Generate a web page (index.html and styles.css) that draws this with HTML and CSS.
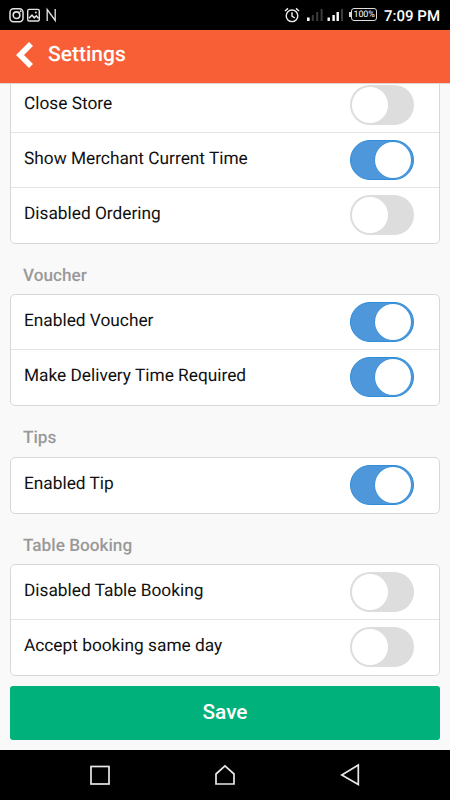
FILE: index.html
```html
<!DOCTYPE html>
<html lang="en">
<head>
  <meta charset="UTF-8">
  <title>Settings</title>
  <link rel="stylesheet" href="styles.css">
</head>
<body>

  <!-- Status bar -->
  <div class="statusbar">
    <svg class="status-left" width="50" height="18" viewBox="0 0 50 18" fill="none" stroke="#e4e4e4">
      <rect x="1" y="2.7" width="13" height="13" rx="3.5" stroke-width="1.5"/>
      <circle cx="7.5" cy="9.2" r="3.3" stroke-width="1.6"/>
      <circle cx="11.6" cy="5.3" r="1" fill="#e4e4e4" stroke="none"/>
      <rect x="18.7" y="3.4" width="11.6" height="11.6" rx="1.5" stroke-width="1.4"/>
      <path d="M20 12.2l3-3 2.3 2.6 2-2 2.3 2.6" stroke-width="1.5"/>
      <circle cx="26.8" cy="6.5" r="1" fill="#e4e4e4" stroke="none"/>
      <path d="M38.2 15V3.5l8 11V3" stroke-width="1.3"/>
    </svg>
    <div class="status-right">
      <svg class="alarm" width="16" height="16" viewBox="0 0 16 16" fill="none" stroke="#eee" stroke-width="1.4">
        <circle cx="8" cy="8.8" r="5.8"/>
        <path d="M8 5.2v4l2.7 1.8M1 4l3-2.6M15 4l-3-2.6"/>
      </svg>
      <svg class="signal" width="36" height="13" viewBox="0 0 36 13">
        <path fill="#fff" d="M0 9.5h2.6V13H0zM20.5 9.5h2.4V13h-2.4zM25.4 7h2.4v6h-2.4zM29.5 4h2.4v9h-2.4z"/>
        <path fill="#3b3b3b" d="M4.8 7h2v6h-2zM9.2 4h2v9h-2zM13.6 1h2v12h-2zM34 1h2v12h-2z"/>
      </svg>
      <div class="battery">100%</div>
      <div class="clock">7:09 PM</div>
    </div>
  </div>

  <!-- Title bar -->
  <div class="navbar">
    <svg width="18" height="26" viewBox="0 0 18 26" fill="none" stroke="#fff" stroke-width="5.6">
      <path d="M15 2L4 13l11 11"/>
    </svg>
    <h1>Settings</h1>
  </div>

  <div class="page">
    <div class="list list-first">
      <div class="row"><span>Close Store</span><div class="switch"></div></div>
      <div class="row"><span>Show Merchant Current Time</span><div class="switch on"></div></div>
      <div class="row"><span>Disabled Ordering</span><div class="switch"></div></div>
    </div>

    <h2>Voucher</h2>
    <div class="list">
      <div class="row"><span>Enabled Voucher</span><div class="switch on"></div></div>
      <div class="row"><span>Make Delivery Time Required</span><div class="switch on"></div></div>
    </div>

    <h2 class="tips">Tips</h2>
    <div class="list">
      <div class="row"><span>Enabled Tip</span><div class="switch on"></div></div>
    </div>

    <h2>Table Booking</h2>
    <div class="list">
      <div class="row"><span>Disabled Table Booking</span><div class="switch"></div></div>
      <div class="row"><span>Accept booking same day</span><div class="switch"></div></div>
    </div>

    <button type="button" class="save">Save</button>
  </div>

  <!-- Android buttons -->
  <div class="softkeys">
    <svg width="22" height="24" viewBox="0 0 22 24"><rect x="2" y="3.5" width="18" height="17.5"/></svg>
    <svg width="22" height="24" viewBox="0 0 22 24"><path d="M2 21V11L11 2.8l9 8.2v10z"/></svg>
    <svg width="22" height="24" viewBox="0 0 22 24"><path d="M19.3 2v19.6L2.8 12z"/></svg>
  </div>

</body>
</html>
```

FILE: styles.css
```css
* {
  box-sizing: border-box;
}
body {
  margin: 0;
  height: 800px;
  display: flex;
  flex-direction: column;
  overflow: hidden;
  background: #f9f9f9;
  font-family: Roboto, sans-serif;
  text-rendering: geometricPrecision;
}

/* Status bar */
.statusbar {
  height: 30px;
  flex: none;
  display: flex;
  justify-content: space-between;
  padding: 0 10px 0 9px;
  background: #000;
  color: #fff;
}
.status-left {
  margin-top: 6px;
}
.status-right {
  display: flex;
  align-items: flex-start;
}
.alarm {
  margin: 7px 7px 0 0;
}
.signal {
  margin: 8px 8px 0 0;
}
.battery {
  position: relative;
  width: 26px;
  height: 13px;
  margin: 8px 7px 0 0;
  border: 1px solid #ddd;
  border-radius: 3px;
  font-size: 9px;
  line-height: 12px;
  text-align: center;
  letter-spacing: -0.2px;
}
.battery::before {
  content: "";
  position: absolute;
  left: -3px;
  top: 3px;
  width: 3px;
  height: 5px;
  background: #ddd;
}
.clock {
  font-size: 15px;
  font-weight: 500;
  line-height: 32px;
  white-space: nowrap;
}

/* Title bar */
.navbar {
  height: 53px;
  flex: none;
  display: flex;
  align-items: center;
  padding: 0 16px 4px;
  background: #f95f36;
  box-shadow: 0 1px 0 #e2d5d0;
  color: #fff;
  z-index: 1;
}
.navbar h1 {
  margin: 0 0 0 14px;
  font-size: 21px;
  font-weight: 500;
  line-height: 26px;
}

.page {
  flex: 1;
  padding: 0 10px;
}
h2 {
  height: 50px;
  margin: 0;
  padding: 20px 13px 0;
  font-size: 17.2px;
  font-weight: 500;
  line-height: 24px;
  color: #999;
}
h2.tips {
  height: 51px;
}

/* Lists */
.list {
  border: 1px solid #d8d8d8;
  border-radius: 5px;
  background: #fff;
}
.list-first {
  margin-top: -6px;
}
.row {
  height: 55px;
  display: flex;
  align-items: flex-start;
  justify-content: space-between;
  padding: 7px 25px 0 13px;
  border-bottom: 1px solid #e4e4e4;
}
.row:last-child {
  border-bottom: 0;
}
.row span {
  font-size: 17.3px;
  line-height: 38px;
  color: #111;
}

/* Switch */
.switch {
  width: 64px;
  height: 40px;
  padding: 2px;
  border-radius: 20px;
  background: #ddd;
}
.switch::before {
  content: "";
  display: block;
  width: 36px;
  height: 36px;
  border-radius: 50%;
  background: #fff;
}
.switch.on {
  background: #4f97db;
  border: 1px solid #2f8dd9;
  padding: 1px;
}
.switch.on::before {
  margin-left: 23px;
  box-shadow: 0 0 0 0.5px #2488d8;
}

.save {
  display: block;
  width: 100%;
  height: 54px;
  margin-top: 10px;
  padding: 0 0 3px;
  border: 0;
  border-radius: 3px;
  background: #00b17b;
  color: #fff;
  font-family: inherit;
  font-size: 20.8px;
  font-weight: 500;
}

.softkeys {
  height: 50px;
  flex: none;
  display: flex;
  justify-content: center;
  align-items: center;
  gap: 103px;
  background: #000;
}
.softkeys svg {
  fill: none;
  stroke: #e8e8e8;
  stroke-width: 1.7;
}
```
